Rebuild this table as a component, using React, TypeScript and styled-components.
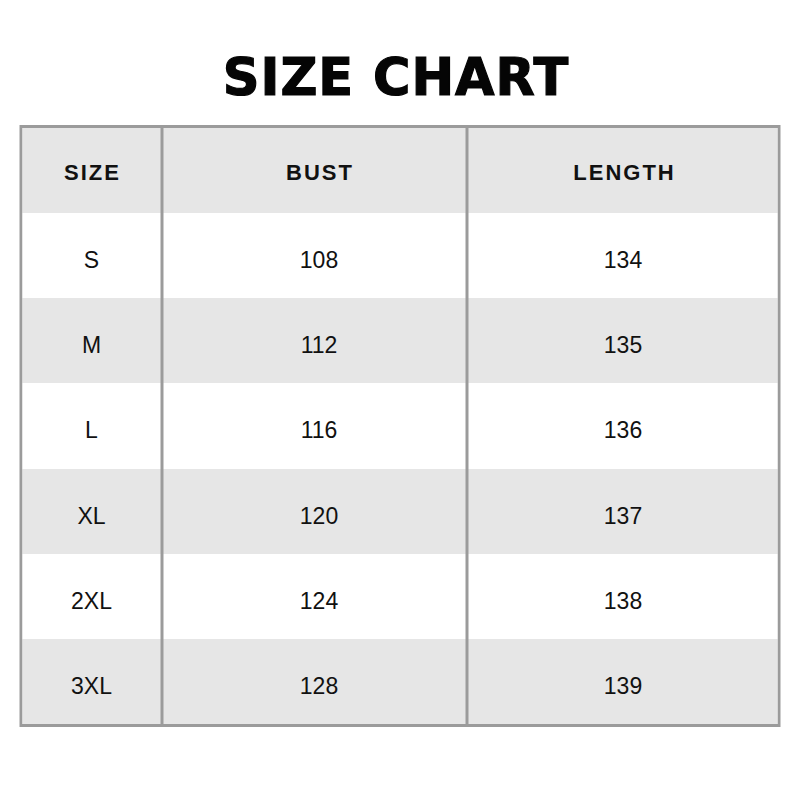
import React from "react";
import styled, { createGlobalStyle } from "styled-components";

const Global = createGlobalStyle`
  html, body { margin: 0; padding: 0; background: #ffffff; }
  body { width: 800px; height: 800px; overflow: hidden; }
`;

const Page = styled.div`
  width: 800px;
  height: 800px;
  padding-top: 52px;
  box-sizing: border-box;
  display: flex;
  flex-direction: column;
  align-items: center;
  background: #ffffff;
`;

const Title = styled.h1`
  margin: 0 0 21px 0;
  font-family: "DejaVu Sans", sans-serif;
  font-weight: 700;
  font-size: 51px;
  line-height: 52px;
  letter-spacing: 1px;
  color: #050505;
  -webkit-text-stroke: 1.2px #050505;
  transform: translateX(-4px);
`;

const Table = styled.div`
  width: 761px;
  box-sizing: border-box;
  border: 3px solid #9b9b9b;
  display: flex;
  flex-direction: column;
  transform: translateX(-0.5px);
`;

const Row = styled.div<{ $shaded: boolean }>`
  display: grid;
  grid-template-columns: 138px 305px 312px;
  height: 85.15px;
  background: ${(p) => (p.$shaded ? "#e6e6e6" : "#ffffff")};
`;

const Cell = styled.div<{ $divider?: boolean; $header?: boolean; $shift?: number }>`
  display: flex;
  align-items: center;
  justify-content: center;
  box-sizing: border-box;
  border-left: ${(p) => (p.$divider ? "3px solid #9b9b9b" : "none")};
  padding-top: ${(p) => (p.$header ? "4px" : "10px")};
  padding-left: ${(p) => (p.$shift ?? 0) + (p.$header ? 2 : 0)}px;
  font-family: "Liberation Sans", Arial, sans-serif;
  font-size: ${(p) => (p.$header ? "22px" : "23px")};
  font-weight: ${(p) => (p.$header ? 700 : 400)};
  letter-spacing: ${(p) => (p.$header ? "2px" : "0")};
  color: #111111;
`;

const rows: [string, string, string][] = [
  ["S", "108", "134"],
  ["M", "112", "135"],
  ["L", "116", "136"],
  ["XL", "120", "137"],
  ["2XL", "124", "138"],
  ["3XL", "128", "139"],
];

export default function App() {
  return (
    <>
      <Global />
      <Page>
        <Title>SIZE CHART</Title>
        <Table>
          <Row $shaded>
            <Cell $header $shift={1}>SIZE</Cell>
            <Cell $header $divider $shift={10}>BUST</Cell>
            <Cell $header $divider $shift={2}>LENGTH</Cell>
          </Row>
          {rows.map((r, i) => (
            <Row key={r[0]} $shaded={i % 2 === 1}>
              <Cell $shift={1}>{r[0]}</Cell>
              <Cell $divider $shift={10}>{r[1]}</Cell>
              <Cell $divider $shift={1}>{r[2]}</Cell>
            </Row>
          ))}
        </Table>
      </Page>
    </>
  );
}
